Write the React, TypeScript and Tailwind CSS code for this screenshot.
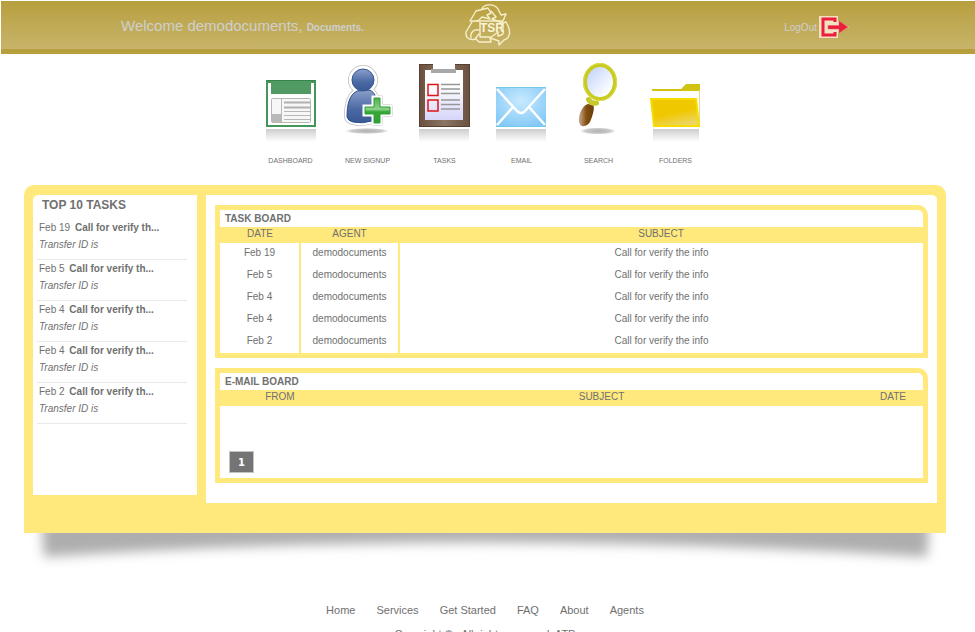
import type { ReactNode } from 'react';

const sidebarTasks = [
  { date: 'Feb 19', title: 'Call for verify th...' },
  { date: 'Feb 5', title: 'Call for verify th...' },
  { date: 'Feb 4', title: 'Call for verify th...' },
  { date: 'Feb 4', title: 'Call for verify th...' },
  { date: 'Feb 2', title: 'Call for verify th...' },
];

const boardDates = ['Feb 19', 'Feb 5', 'Feb 4', 'Feb 4', 'Feb 2'];

const footerLinks = ['Home', 'Services', 'Get Started', 'FAQ', 'About', 'Agents'];

function Floor({ x = 0, width = 50 }: { x?: number; width?: number }) {
  return <rect x={x} y="67" width={width} height="13" fill="url(#floor)" />;
}

function Defs() {
  return (
    <svg width="0" height="0" className="absolute" aria-hidden="true">
      <defs>
        <linearGradient id="floor" x1="0" y1="0" x2="0" y2="1">
          <stop offset="0" stopColor="#cecece" />
          <stop offset="1" stopColor="#ffffff" />
        </linearGradient>
        <radialGradient id="spot">
          <stop offset="0" stopColor="#b0b0b0" />
          <stop offset="0.7" stopColor="#cacaca" />
          <stop offset="1" stopColor="#ffffff" />
        </radialGradient>
        <linearGradient id="blue" x1="0" y1="0" x2="0" y2="1">
          <stop offset="0" stopColor="#8a9fca" />
          <stop offset="0.6" stopColor="#4a68a3" />
          <stop offset="1" stopColor="#3a5a94" />
        </linearGradient>
        <linearGradient id="plus" x1="0" y1="0" x2="0" y2="1">
          <stop offset="0" stopColor="#4fb04f" />
          <stop offset="0.45" stopColor="#8fd28c" />
          <stop offset="0.55" stopColor="#35a838" />
          <stop offset="1" stopColor="#2da232" />
        </linearGradient>
        <linearGradient id="wood" x1="0" y1="0" x2="1" y2="0">
          <stop offset="0" stopColor="#6b513f" />
          <stop offset="0.5" stopColor="#8b7563" />
          <stop offset="1" stopColor="#6b513f" />
        </linearGradient>
        <linearGradient id="paper" x1="0" y1="0" x2="0" y2="1">
          <stop offset="0.3" stopColor="#ffffff" />
          <stop offset="1" stopColor="#d5d5fa" />
        </linearGradient>
        <radialGradient id="mail" cx="0.5" cy="0.35" r="0.7">
          <stop offset="0" stopColor="#c8eaff" />
          <stop offset="1" stopColor="#82c8f7" />
        </radialGradient>
        <linearGradient id="lens" x1="0" y1="0" x2="1" y2="1">
          <stop offset="0.1" stopColor="#c2d3fa" />
          <stop offset="0.8" stopColor="#ffffff" />
        </linearGradient>
        <linearGradient id="handle" x1="0" y1="0" x2="1" y2="0">
          <stop offset="0.05" stopColor="#c0a48a" />
          <stop offset="0.5" stopColor="#85500f" />
          <stop offset="1" stopColor="#683c0c" />
        </linearGradient>
        <linearGradient id="folder" x1="0.3" y1="0" x2="0.7" y2="1">
          <stop offset="0.5" stopColor="#f0c800" />
          <stop offset="1" stopColor="#ecd76a" />
        </linearGradient>
      </defs>
    </svg>
  );
}

function NavIcon({ children }: { children: ReactNode }) {
  return (
    <svg width="52" height="82" viewBox="0 0 52 82" aria-hidden="true">
      {children}
    </svg>
  );
}

function DashboardIcon() {
  return (
    <NavIcon>
      <rect x="1" y="18" width="50" height="47" fill="#43955a" />
      <rect x="3" y="21" width="46" height="42" fill="#ffffff" />
      <rect x="6" y="19" width="40" height="13" fill="#529a63" />
      <path d="M2 18.500H50" stroke="#34844b" />
      <rect x="6.500" y="36.500" width="39" height="24" rx="1" fill="#f7f7f7" stroke="#b7b7b7" />
      <rect x="7" y="52" width="9" height="9" fill="#b9b9b9" />
      <path d="M16.500 37V60" stroke="#b7b7b7" />
      <path d="M19 40.500H45M19 45.500H45" stroke="#b0b0b0" strokeWidth="2" />
      <path d="M19 49.500H45M19 53.500H45M19 57.500H45" stroke="#b8b8b8" />
      <Floor x={1} />
    </NavIcon>
  );
}

function SignupIcon() {
  const body = 'M15 29C7 33 5 43 5 55Q6 59 11 60Q20 62 30 59L34 50V36Q32 29 27 28Z';
  const cross = 'M32 36h6v9h10v7H38v9h-6V52H23v-7h9Z';
  return (
    <NavIcon>
      <ellipse cx="25" cy="69" rx="22" ry="3" fill="url(#spot)" />
      <g stroke="#bdbdbd" strokeWidth="6" strokeLinejoin="round" fill="#bdbdbd">
        <circle cx="21" cy="18" r="12" />
        <path d={body} />
        <path d={cross} />
      </g>
      <g stroke="#ffffff" strokeWidth="4.500" strokeLinejoin="round" fill="#ffffff">
        <circle cx="21" cy="18" r="12" />
        <path d={body} />
      </g>
      <path d={body} fill="url(#blue)" stroke="#2c4f8d" />
      <circle cx="21" cy="18" r="11" fill="url(#blue)" stroke="#335793" />
      <path d={cross} fill="#ffffff" stroke="#ffffff" strokeWidth="5" />
      <path d={cross} fill="url(#plus)" stroke="#2f9e33" />
    </NavIcon>
  );
}

function TasksIcon() {
  return (
    <NavIcon>
      <rect x="0.500" y="2.500" width="50" height="62" fill="url(#wood)" stroke="#58402f" />
      <rect x="6" y="8" width="38" height="50" fill="url(#paper)" />
      <rect x="14" y="2" width="22" height="7" fill="#ffffff" />
      <rect x="12" y="7" width="25" height="4" fill="#a8a8a8" />
      <path d="M9 22.500h10v11H9ZM9 38h10v11H9Z" fill="none" stroke="#e01515" strokeWidth="1.500" />
      <path d="M22 22.500H41M22 27H41M22 31.500H41M22 38H41M22 42.500H41M22 47H41" stroke="#969696" strokeWidth="1.500" />
      <Floor />
    </NavIcon>
  );
}

function EmailIcon() {
  return (
    <NavIcon>
      <rect y="25" width="50" height="40" fill="url(#mail)" />
      <path d="M1 27L21 49Q25 53 29 49L49 27M1 63L17 45M49 63L33 45" fill="none" stroke="#ffffff" strokeWidth="2.500" />
      <path d="M0 25.500H50M0 64.500H50" stroke="#74c8ea" />
      <Floor />
    </NavIcon>
  );
}

function SearchIcon() {
  return (
    <NavIcon>
      <ellipse cx="25" cy="69" rx="18" ry="3.500" fill="url(#spot)" />
      <path d="M15 42C10 43 5 52 6 60C7 66 14 65 17 60C20 53 22 45 20 43Z" fill="url(#handle)" />
      <path d="M15.500 37.500Q18 42 23.500 41" stroke="#c5c929" strokeWidth="5" fill="none" strokeLinecap="round" />
      <ellipse cx="27" cy="20" rx="15" ry="17" fill="url(#lens)" stroke="#c7cb22" strokeWidth="4" />
      <ellipse cx="27" cy="20" rx="16.500" ry="18.500" fill="none" stroke="#dfdc45" />
    </NavIcon>
  );
}

function FoldersIcon() {
  return (
    <NavIcon>
      <path d="M2 27H31L36 22H50V29H2Z" fill="#d2c312" />
      <path d="M3 29H49V42H3Z" fill="#ffffff" />
      <path d="M49.500 28V64" stroke="#e7dc86" />
      <path d="M1 37H46L49 64H4Z" fill="url(#folder)" stroke="#f6dc00" strokeWidth="2" />
      <Floor x={3} width={46} />
    </NavIcon>
  );
}

const navItems = [
  { label: 'DASHBOARD', Icon: DashboardIcon },
  { label: 'NEW SIGNUP', Icon: SignupIcon },
  { label: 'TASKS', Icon: TasksIcon },
  { label: 'EMAIL', Icon: EmailIcon },
  { label: 'SEARCH', Icon: SearchIcon },
  { label: 'FOLDERS', Icon: FoldersIcon },
];

function Logo() {
  return (
    <svg width="46" height="42" viewBox="0 0 46 42" role="img" aria-label="TSR">
      <g fill="none" stroke="#f6efc9" strokeWidth="1.400" strokeLinejoin="round" strokeLinecap="round">
        <path d="M5 17L11 7L23 4L26 9L22 11L25 15L17 13L13 17Z" />
        <path d="M17 5C19 -1 30 0 33 5L36 11L41 10L37 19L27 15L31 13L26 7" />
        <path d="M11 17H37" />
        <path d="M38 19L41 18C46 26 46 34 39 36L34 41V37L25 34L33 28V32Q40 31 38 26Z" />
        <path d="M7 18L1 28C0 34 5 37 11 35L14 38H26L25 33H15V18" />
        <path d="M6 34C5 28 9 25 14 26M10 35L14 30" />
      </g>
      <text x="15" y="28" fontSize="12" fontWeight="bold" fill="#f9f4d8" fontFamily="Liberation Sans, sans-serif">TSR</text>
    </svg>
  );
}

function LogoutIcon() {
  return (
    <svg width="30" height="24" viewBox="0 0 30 24" aria-hidden="true">
      <path d="M0 1H19V6L30 12L19 18V23H0Z" fill="#efe3c1" />
      <path d="M16 7V4H4V20H16V17" fill="none" stroke="#ef1d3c" strokeWidth="3" />
      <path d="M9 10.500H20V6L29 12L20 18V14H9Z" fill="#e8203b" stroke="#f6506a" strokeWidth="0.500" />
    </svg>
  );
}

function Board({ title, children }: { title: string; children: ReactNode }) {
  return (
    <section className="overflow-hidden rounded-tr-[10px] border-[5px] border-[#ffe97c] bg-white">
      <h2 className="h-[17px] pl-[5px] leading-[17px] font-bold">{title}</h2>
      {children}
    </section>
  );
}

function PanelShadow() {
  return (
    <svg className="block h-10 w-full" viewBox="0 0 922 40" preserveAspectRatio="none" aria-hidden="true">
      <defs>
        <filter id="soft" x="-5%" y="-50%" width="110%" height="200%">
          <feGaussianBlur stdDeviation="6" />
        </filter>
      </defs>
      <path d="M17 -20H906L903 24Q461 -5 20 24Z" fill="#aeaeae" filter="url(#soft)" />
    </svg>
  );
}

export default function App() {
  return (
    <div className="min-h-screen bg-white font-['Liberation_Sans',Arial,sans-serif] text-[10px] text-[#707070]">
      <Defs />
      <div className="pt-px pl-px">
        <header className="grid h-[53px] grid-cols-3 items-center border-b-[5px] border-[#b79f3d] bg-linear-to-b from-[#b79f3c] to-[#c8b46a] text-[#cfcfcf]">
          <p className="pt-1 pl-[120px] text-[15px] leading-6 whitespace-nowrap">
            Welcome demodocuments, <strong className="text-[10px]">Documents.</strong>
          </p>
          <div className="flex justify-center">
            <Logo />
          </div>
          <a href="#logout" className="flex items-center justify-end gap-0.5 pt-1 pr-[126px]">
            LogOut <LogoutIcon />
          </a>
        </header>
      </div>

      <div className="mr-[5px]">
        <nav className="ml-[-4px] flex justify-center pt-2">
          {navItems.map(({ label, Icon }) => (
            <a
              key={label}
              href={`#${label.toLowerCase().replace(' ', '-')}`}
              className="flex w-[77px] flex-col items-center text-[7px] leading-4"
            >
              <Icon />
              <span className="pt-[9px]">{label}</span>
            </a>
          ))}
        </nav>

        <div className="mx-6 mt-4">
          <main className="flex items-start rounded-t-[10px] bg-[#ffe97c] px-[9px] pt-2.5 pb-[30px]">
            <aside className="min-h-[300px] w-[164px] shrink-0 rounded-tl-[5px] bg-white pr-2.5 pl-1">
              <h2 className="pl-[5px] text-xs leading-5 font-bold">TOP 10 TASKS</h2>
              <ul className="pt-1">
                {sidebarTasks.map((task, i) => (
                  <li key={i} className="h-[41px] border-b border-[#e9e9e9] pl-0.5 leading-[17px]">
                    <p>
                      {task.date} <strong className="pl-0.5">{task.title}</strong>
                    </p>
                    <p className="italic">Transfer ID is</p>
                  </li>
                ))}
              </ul>
            </aside>

            <div className="ml-[9px] flex min-w-0 flex-1 flex-col gap-2.5 rounded-tr-[5px] bg-white px-[9px] pt-2.5 pb-5">
              <Board title="TASK BOARD">
                <table className="w-full table-fixed border-collapse text-center">
                  <thead className="bg-[#ffe97c]">
                    <tr className="h-4 leading-[14px]">
                      <th className="w-20 p-0 pb-0.5 font-normal">DATE</th>
                      <th className="w-[99px] p-0 pb-0.5 font-normal">AGENT</th>
                      <th className="p-0 pb-0.5 font-normal">SUBJECT</th>
                    </tr>
                  </thead>
                  <tbody>
                    {boardDates.map((date, i) => (
                      <tr key={i} className="h-[22px] leading-5">
                        <td className="border-r-2 border-[#ffe97c] p-0 pb-0.5">{date}</td>
                        <td className="border-r-2 border-[#ffe97c] p-0 pb-0.5">demodocuments</td>
                        <td className="p-0 pb-0.5">Call for verify the info</td>
                      </tr>
                    ))}
                  </tbody>
                </table>
              </Board>

              <Board title="E-MAIL BOARD">
                <table className="w-full table-fixed border-collapse text-center">
                  <thead className="bg-[#ffe97c]">
                    <tr className="h-4 leading-[14px]">
                      <th className="w-[120px] p-0 pb-0.5 font-normal">FROM</th>
                      <th className="p-0 pb-0.5 font-normal">SUBJECT</th>
                      <th className="w-[60px] p-0 pb-0.5 font-normal">DATE</th>
                    </tr>
                  </thead>
                </table>
                <div className="px-2.5 pt-[46px] pb-1.5">
                  <button
                    type="button"
                    className="block h-5 w-[23px] bg-[#747474] font-['DejaVu_Sans',sans-serif] leading-[22px] font-bold text-white outline outline-[#c4c4c4]"
                  >
                    1
                  </button>
                </div>
              </Board>
            </div>
          </main>
          <PanelShadow />
        </div>

        <footer className="pt-7 text-center text-[11px] leading-[18px]">
          <nav className="flex justify-center gap-[21px]">
            {footerLinks.map((link) => (
              <a key={link} href={`#${link.toLowerCase().replace(' ', '-')}`}>
                {link}
              </a>
            ))}
          </nav>
          <p className="pt-1.5">Copyright ©.&nbsp; All rights reserved. ATP</p>
        </footer>
      </div>
    </div>
  );
}
